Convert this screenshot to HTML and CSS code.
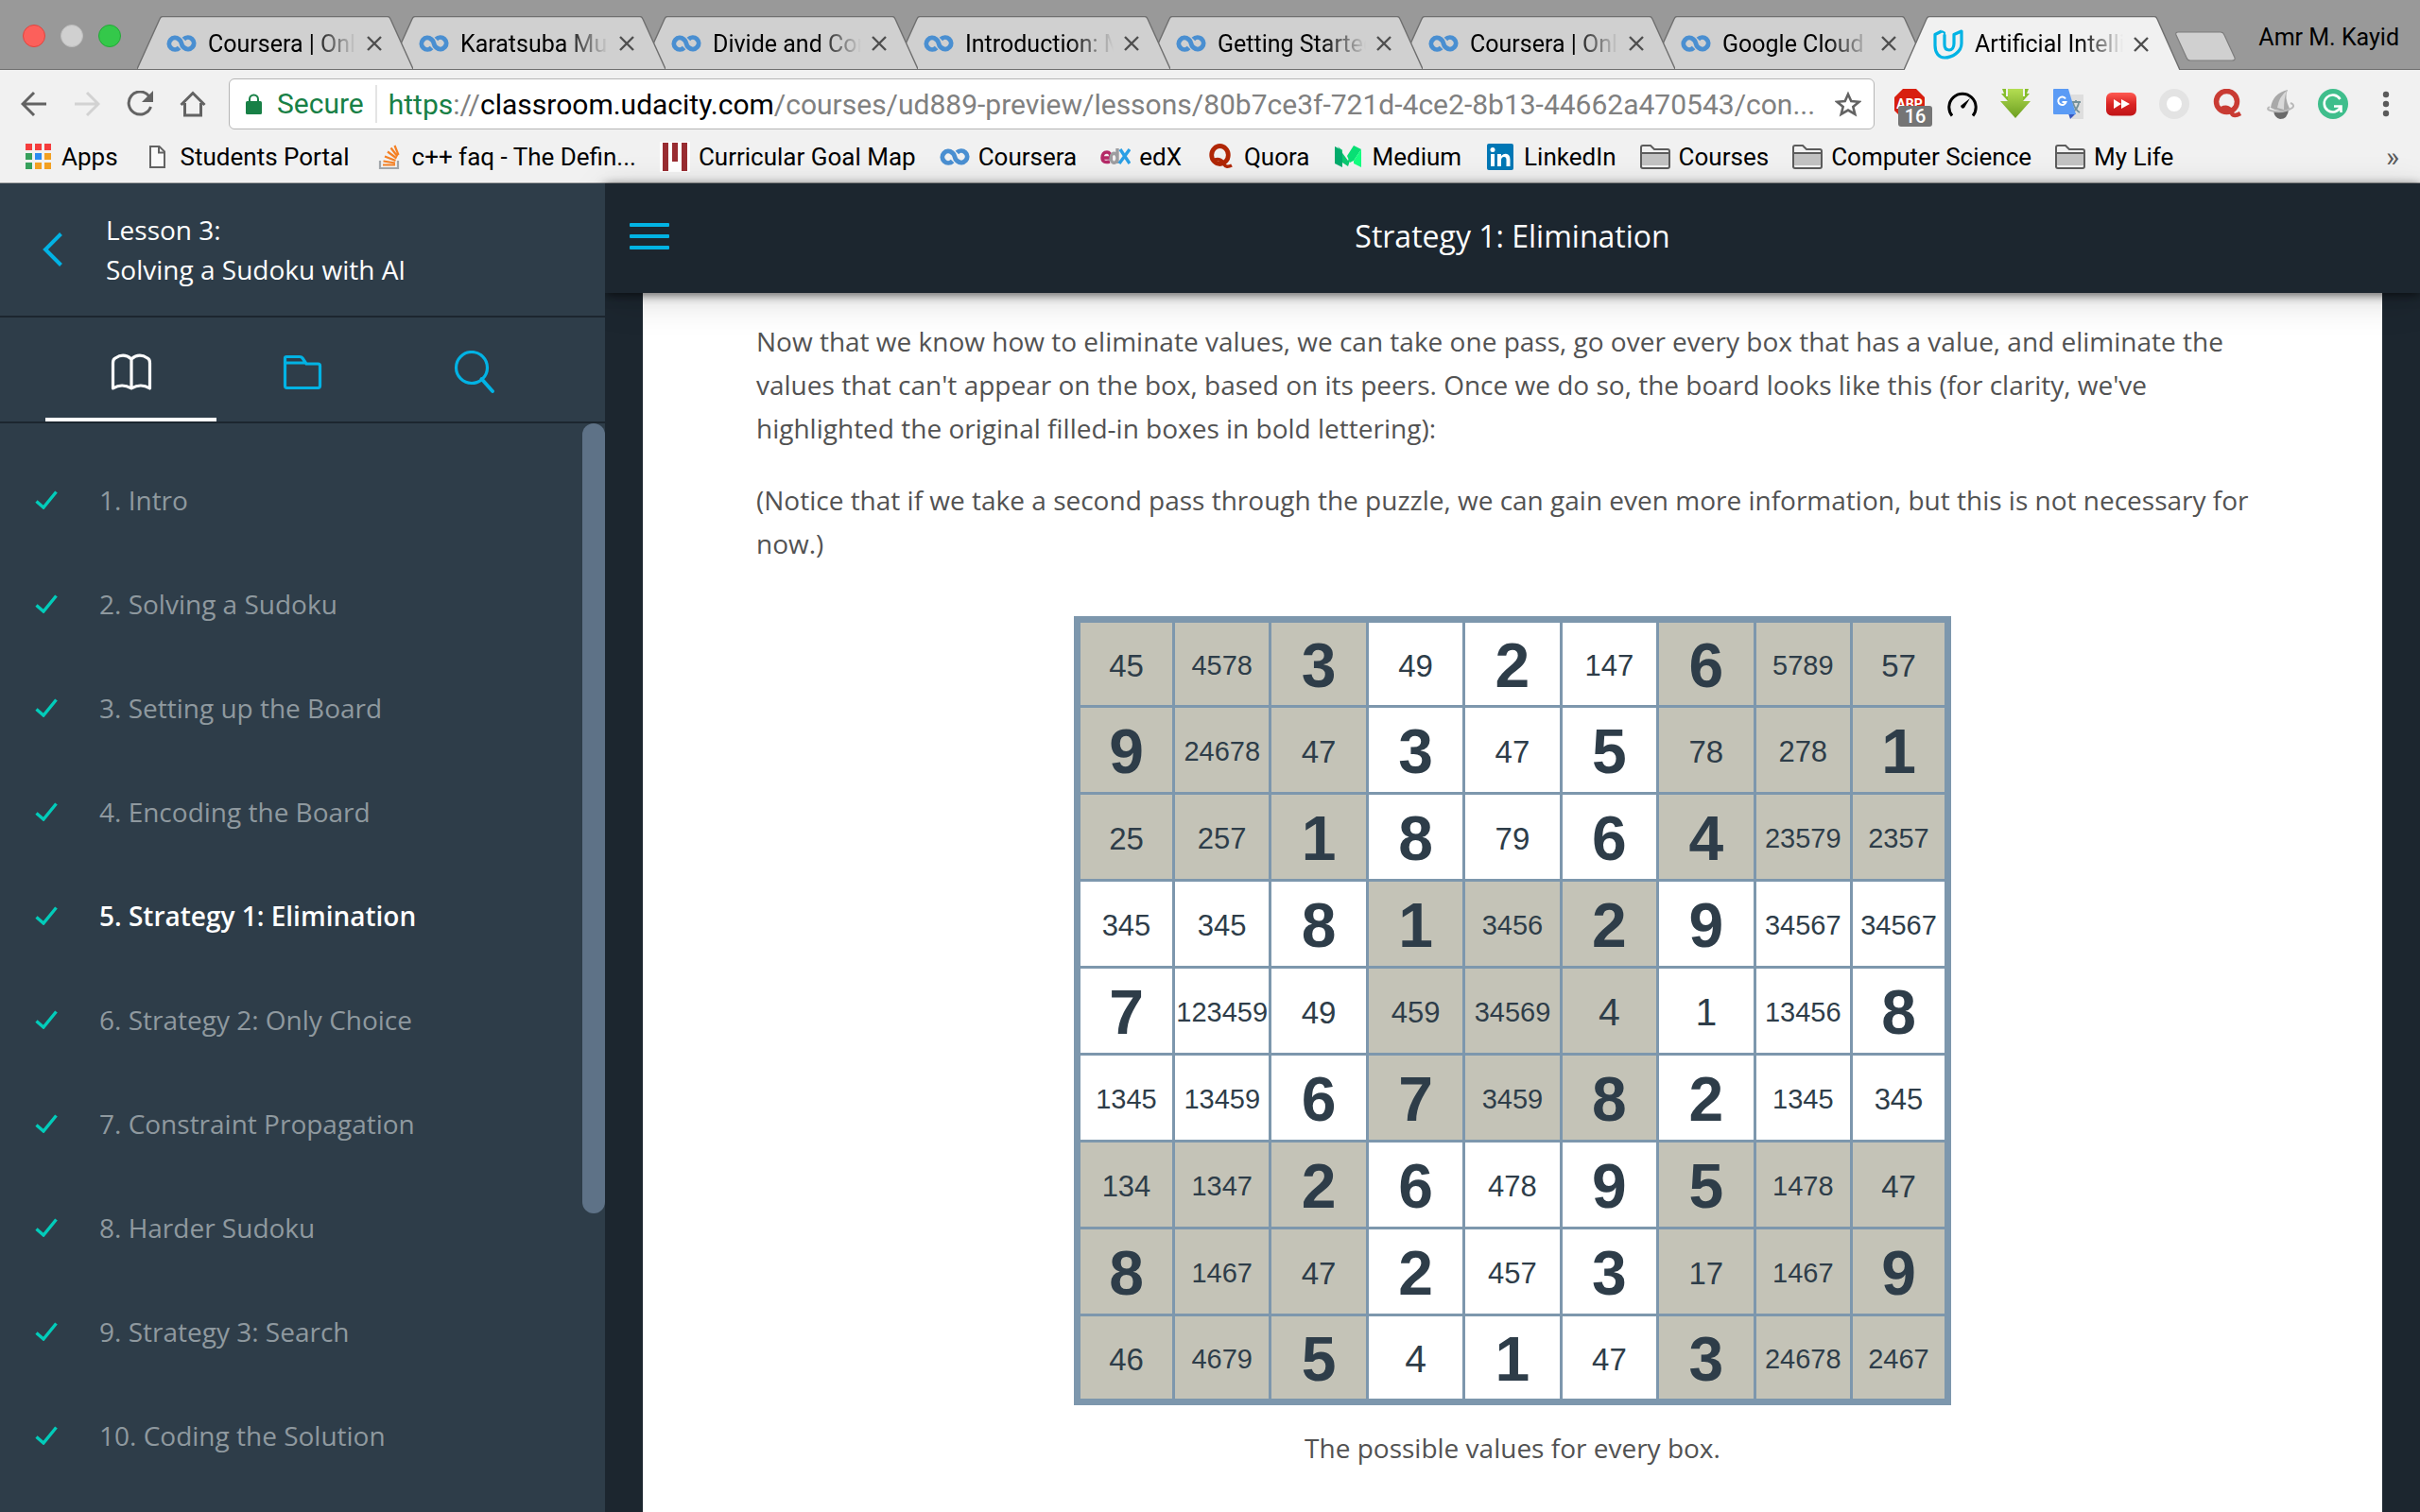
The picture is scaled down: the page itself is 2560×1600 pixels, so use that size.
FILE: index.html
```html
<!DOCTYPE html>
<html lang="en">
<head>
<meta charset="utf-8">
<title>Strategy 1: Elimination</title>
<link rel="stylesheet" href="styles.css">
</head>
<body>
<svg class="defs" aria-hidden="true">
  <symbol id="coursera" viewBox="0 0 31 17">
    <path d="M17.800 4.200A6 6 0 1 1 18.200 12.800Q15.800 11 15.500 8.500Q15.200 6 12.800 4.200A6 6 0 1 0 13.200 12.800" fill="none" stroke="#4a8fd1" stroke-width="4.800"/>
  </symbol>
  <symbol id="tab-shape" viewBox="0 0 292 57" preserveAspectRatio="none">
    <path d="M0 57L24 3Q25 .5 27 .5H265Q267 .5 268 3L292 57Z" fill="currentColor"/>
    <path d="M0 57L24 3Q25 .5 27 .5H265Q267 .5 268 3L292 57" fill="none" stroke="#6f6f6f" stroke-width="1.4"/>
  </symbol>
  <symbol id="close" viewBox="0 0 16 16"><path d="M1 1L15 15M15 1L1 15" stroke="#4f4f4f" stroke-width="2.4" fill="none"/></symbol>
  <symbol id="folder" viewBox="0 0 32 26">
    <path d="M1 24V3Q1 1 3 1H11L15 5H29Q31 5 31 7V23Q31 25 29 25H3Q1 25 1 23Z" fill="#f1f1f1" stroke="#5c5c5c" stroke-width="2"/>
    <path d="M2 9.500H30V22H2Z" fill="#c2c2c2"/><path d="M1 9H31" stroke="#5c5c5c" stroke-width="2"/>
  </symbol>
  <symbol id="check" viewBox="0 0 24 20"><path d="M1.500 11.500L9 18L22.500 1.500" fill="none" stroke="#02ccba" stroke-width="3.400"/></symbol>
</svg>

<header class="browser">
  <div class="titlebar">
    <div class="lights">
      <button class="light red" aria-label="Close window"></button>
      <button class="light grey" aria-label="Minimize window"></button>
      <button class="light green" aria-label="Zoom window"></button>
    </div>
    <nav class="tabs" aria-label="Browser tabs">
      <div class="tab"><svg class="shape"><use href="#tab-shape"/></svg><svg class="fav"><use href="#coursera"/></svg><a href="#" class="tab-title">Coursera | Online</a><button class="close" aria-label="Close tab"><svg><use href="#close"/></svg></button></div>
      <div class="tab"><svg class="shape"><use href="#tab-shape"/></svg><svg class="fav"><use href="#coursera"/></svg><a href="#" class="tab-title">Karatsuba Multi</a><button class="close" aria-label="Close tab"><svg><use href="#close"/></svg></button></div>
      <div class="tab"><svg class="shape"><use href="#tab-shape"/></svg><svg class="fav"><use href="#coursera"/></svg><a href="#" class="tab-title">Divide and Conq</a><button class="close" aria-label="Close tab"><svg><use href="#close"/></svg></button></div>
      <div class="tab"><svg class="shape"><use href="#tab-shape"/></svg><svg class="fav"><use href="#coursera"/></svg><a href="#" class="tab-title">Introduction: Ma</a><button class="close" aria-label="Close tab"><svg><use href="#close"/></svg></button></div>
      <div class="tab"><svg class="shape"><use href="#tab-shape"/></svg><svg class="fav"><use href="#coursera"/></svg><a href="#" class="tab-title">Getting Started</a><button class="close" aria-label="Close tab"><svg><use href="#close"/></svg></button></div>
      <div class="tab"><svg class="shape"><use href="#tab-shape"/></svg><svg class="fav"><use href="#coursera"/></svg><a href="#" class="tab-title">Coursera | Online</a><button class="close" aria-label="Close tab"><svg><use href="#close"/></svg></button></div>
      <div class="tab"><svg class="shape"><use href="#tab-shape"/></svg><svg class="fav"><use href="#coursera"/></svg><a href="#" class="tab-title">Google Cloud Pl</a><button class="close" aria-label="Close tab"><svg><use href="#close"/></svg></button></div>
      <div class="tab active"><svg class="shape"><use href="#tab-shape"/></svg><svg class="fav" viewBox="0 0 32 32"><path d="M9 2L2 5.500V17C2 25 6 30 12 30C20 30 30 24 30 15V2L22 5.500V15C22 19 20 22 17 22C14 22 12 20 12 16V5.500" fill="none" stroke="#02b3e4" stroke-width="3.200" stroke-linejoin="round"/><path d="M9 2L12 3.500V16" fill="none" stroke="#02b3e4" stroke-width="2"/></svg><a href="#" class="tab-title">Artificial Intellige</a><button class="close" aria-label="Close tab"><svg><use href="#close"/></svg></button></div>
    </nav>
    <button class="new-tab" aria-label="New tab"><svg viewBox="0 0 66 32"><path d="M4 1H49Q52 1 53 4L64 28Q65 31 61 31H17Q14 31 13 28L2 4Q1 1 4 1Z" fill="#d0d0d0" stroke="#7d7d7d" stroke-width="1.200"/></svg></button>
    <span class="profile">Amr M. Kayid</span>
  </div>

  <div class="toolbar">
    <div class="nav">
      <button aria-label="Back"><svg viewBox="0 0 28 28"><path d="M14 2L2 14L14 26M2 14H27" fill="none" stroke="#636363" stroke-width="3"/></svg></button>
      <button aria-label="Forward"><svg viewBox="0 0 28 28"><path d="M14 2L26 14L14 26M26 14H1" fill="none" stroke="#d2d2d2" stroke-width="3"/></svg></button>
      <button aria-label="Reload"><svg viewBox="0 0 28 28"><path d="M23.500 5.500A12 12 0 1 0 25.500 17" fill="none" stroke="#636363" stroke-width="3"/><path d="M28 0V12H16Z" fill="#636363"/></svg></button>
      <button aria-label="Home"><svg viewBox="0 0 28 28"><path d="M1.500 15L14 2.500L26.500 15M5.500 13V26H22.500V13" fill="none" stroke="#636363" stroke-width="3"/></svg></button>
    </div>
    <div class="omnibox">
      <svg class="lock" viewBox="0 0 17 22"><path d="M4 10V6A4.500 4.500 0 0 1 13 6V10" fill="none" stroke="#188046" stroke-width="2"/><rect y="8" width="17" height="14" rx="1.500" fill="#188046"/></svg>
      <span class="secure">Secure</span>
      <div class="url" role="textbox" contenteditable="true" spellcheck="false" aria-label="Address"><span class="scheme">https</span>://<span class="host">classroom.udacity.com</span>/courses/ud889-preview/lessons/80b7ce3f-721d-4ce2-8b13-44662a470543/con...</div>
      <button class="star" aria-label="Bookmark this page"><svg viewBox="0 0 30 28"><path d="M15 3L18.500 10.800L27.500 11.600L20.700 17.200L22.800 25.500L15 21L7.200 25.500L9.300 17.200L2.500 11.600L11.500 10.800Z" fill="none" stroke="#636363" stroke-width="2.800"/></svg></button>
    </div>
    <div class="extensions">
      <button aria-label="Adblock Plus, 16 blocked"><svg viewBox="0 0 32 32"><path d="M9 0H23L32 9V23L23 32H9L0 23V9Z" fill="#d81f10"/><text x="16" y="21" text-anchor="middle" class="abp">ABP</text></svg><span class="badge">16</span></button>
      <button aria-label="Speed"><svg viewBox="0 0 32 32"><path d="M5 28.500A14.200 14.200 0 1 1 27 28.500" fill="none" stroke="#000" stroke-width="3"/><path d="M24 10L18 20Q15 22 14 18Z" fill="#000"/></svg></button>
      <button aria-label="Downloader"><svg viewBox="0 0 32 32"><defs><linearGradient id="g1" x2="0" y2="1"><stop stop-color="#b4de52"/><stop offset="1" stop-color="#6c9e20"/></linearGradient></defs><path d="M2 0H6V8H11L8 13L1 5H4Z M30 0H26V8H21L24 13L31 5H28Z" fill="#86bd2c"/><path d="M8 0H24V13H32L16 31L0 13H8Z" fill="url(#g1)"/></svg></button>
      <button aria-label="Translate"><svg viewBox="0 0 32 32"><path d="M12 6H32V32H20Z" fill="#dedede"/><path d="M19 14H29M24 12V14M21 15Q23 22 28 25M27 15Q26 21 20 25" stroke="#74919a" stroke-width="1.800" fill="none"/><path d="M16 26H24L18 32Z" fill="#3859c0"/><path d="M0 1Q0 0 1 0H16L24 27H1Q0 27 0 26Z" fill="#5b9bf5"/><path d="M13 10.500A4.200 4.200 0 1 0 13.500 14H9.500" stroke="#fff" stroke-width="2" fill="none"/></svg></button>
      <button aria-label="Playback"><svg viewBox="0 0 32 32"><defs><linearGradient id="g2" x2="0" y2="1"><stop stop-color="#ff5a52"/><stop offset=".5" stop-color="#d92423"/><stop offset="1" stop-color="#c01417"/></linearGradient></defs><rect y="4" width="32" height="24.500" rx="6" fill="url(#g2)"/><path d="M8 11L16 16L8 21ZM16 11L25 16L16 21Z" fill="#fff"/></svg></button>
      <button aria-label="Recorder"><svg viewBox="0 0 32 32"><circle cx="16" cy="16" r="16" fill="#e3e3e3"/><circle cx="16" cy="16" r="8" fill="#fff"/></svg></button>
      <button aria-label="Quora"><svg viewBox="0 0 32 32"><ellipse cx="15.500" cy="13.500" rx="11" ry="11" fill="none" stroke="#c93b33" stroke-width="5.500"/><path d="M10 21Q18 17 21 26Q23 30 30 26" stroke="#c93b33" stroke-width="4.500" fill="none"/></svg></button>
      <button aria-label="Rocket"><svg viewBox="0 0 32 32"><path d="M6 20Q8 5 24 1Q20 8 26 21Q16 26 6 20Z" fill="#a9a9a9"/><path d="M13 20Q15 8 23 2Q20 10 20 22Z" fill="#d9d9d9"/><path d="M9 23Q18 26 25 22Q24 32 16 32Q10 31 9 23Z" fill="#6a6a6a"/><path d="M5 19Q0 22 8 23.500Q20 26 29 20Q32 17 27 15" fill="none" stroke="#b9b9b9" stroke-width="2"/></svg></button>
      <button aria-label="Grammarly"><svg viewBox="0 0 32 32"><circle cx="16" cy="16" r="16" fill="#3fbe8c"/><path d="M23.500 11A9 9 0 1 0 24 19M17 18.500H24.500V25" fill="none" stroke="#fff" stroke-width="2.600"/></svg></button>
      <button class="more" aria-label="Menu"><svg viewBox="0 0 8 28"><circle cx="4" cy="4" r="3.200" fill="#5a5a5a"/><circle cx="4" cy="14" r="3.200" fill="#5a5a5a"/><circle cx="4" cy="24" r="3.200" fill="#5a5a5a"/></svg></button>
    </div>
  </div>

  <nav class="bookmarks" aria-label="Bookmarks">
    <a href="#"><svg viewBox="0 0 32 32"><path d="M3 2h7v7H3zM13 2h7v7h-7zM23 2h7v7h-7z" fill="#f53d3d"/><path d="M3 12h7v7H3zM3 22h7v7H3z" fill="#37a05c"/><path d="M13 12h7v7h-7z" fill="#2a8bf2"/><path d="M23 12h7v7h-7zM13 22h7v7h-7zM23 22h7v7h-7z" fill="#f2a022"/></svg>Apps</a>
    <a href="#"><svg viewBox="0 0 32 32"><path d="M9 5H18.500L24 10.500V27H9Z" fill="#fafafa" stroke="#636363" stroke-width="2"/><path d="M18 5V11.500H24" fill="none" stroke="#636363" stroke-width="2"/></svg>Students Portal</a>
    <a href="#"><svg viewBox="0 0 32 32"><path d="M7 20V28H26V20" fill="none" stroke="#a2a6aa" stroke-width="2.200"/><path d="M10 24.500H23M10.500 20.500L23 22.500M12 15.500L23.500 20M15 10.500L24.500 17.500M18.500 6.500L25.500 15.500M22.500 4L26.500 14" stroke="#f48024" stroke-width="2.200"/></svg>c++ faq - The Defin...</a>
    <a href="#"><svg viewBox="0 0 32 32"><rect width="32" height="32" fill="#fff"/><path d="M3 1h6v30H3zM13 1h6v20h-6zM23 1h6v30h-6z" fill="#992d32"/></svg>Curricular Goal Map</a>
    <a href="#"><svg><use href="#coursera"/></svg>Coursera</a>
    <a href="#"><svg viewBox="0 0 32 32"><g fill="none" stroke-width="3.400"><path d="M2 17H11Q11 11 7 11Q2 11 2 17Q2 23 10 21" stroke="#b52a67"/><path d="M18 17A3.500 5 0 1 0 18 17.500M18 7V23" stroke="#9d9da0"/><path d="M21 8L31 23M31 8L20 23" stroke="#2a9fe5"/></g></svg>edX</a>
    <a href="#"><svg viewBox="0 0 32 32"><ellipse cx="15.500" cy="14" rx="8.800" ry="9.500" fill="none" stroke="#b02706" stroke-width="4.800"/><path d="M10 19Q17 17 20 24Q22 28 28 25" stroke="#b02706" stroke-width="3.600" fill="none"/></svg>Quora</a>
    <a href="#"><svg viewBox="0 0 32 32"><path d="M2 5L10 9V27L2 23Z" fill="#02ab6c"/><path d="M5 5L16 20L22 8L16 26L10 22V9Z" fill="#0bc870"/><path d="M15 15L22 4L30 8L22 20L18 22Z" fill="#08df74"/><path d="M22 20L30 8V27L22 23Z" fill="#14ff80"/></svg>Medium</a>
    <a href="#"><svg viewBox="0 0 32 32"><rect x="2" y="2" width="28" height="28" rx="2" fill="#0077b5"/><path d="M6 13h4v13H6zM13 13h4v2q4-4 8-1q1.500 1.500 1.500 5v7h-4v-7q0-3-2.500-3t-3 3v7h-4z" fill="#fff"/><circle cx="8" cy="8.500" r="2.500" fill="#fff"/></svg>LinkedIn</a>
    <a href="#"><svg><use href="#folder"/></svg>Courses</a>
    <a href="#"><svg><use href="#folder"/></svg>Computer Science</a>
    <a href="#"><svg><use href="#folder"/></svg>My Life</a>
    <button class="overflow" aria-label="More bookmarks">»</button>
  </nav>
</header>

<div class="classroom">
  <aside class="sidebar">
    <div class="lesson">
      <a href="#" class="back" aria-label="Back to lessons"><svg viewBox="0 0 22 36"><path d="M19.500 1.500L3 18L19.500 34.500" fill="none" stroke="#02b3e4" stroke-width="4"/></svg></a>
      <h2>Lesson 3:<br>Solving a Sudoku with AI</h2>
    </div>
    <div class="panes">
      <button class="pane selected" aria-label="Contents"><svg viewBox="0 0 44 48"><path d="M22 9Q14 2 5 8Q2.500 9 2.500 13V40Q12 34 22 40Q32 34 41.500 40V13Q41.500 9 39 8Q30 2 22 9ZM22 9V40" fill="none" stroke="#fff" stroke-width="3.200" stroke-linejoin="round"/></svg></button>
      <button class="pane" aria-label="Resources"><svg viewBox="0 0 44 48"><path d="M3.500 14V8Q3.500 6.500 5 6.500H19Q21 6.500 22 8L26 14H38.500Q40.500 14 40.500 16V37Q40.500 39.500 38.500 39.500H5.500Q3.500 39.500 3.500 37V13H26" fill="none" stroke="#02b3e4" stroke-width="3.200"/></svg></button>
      <button class="pane" aria-label="Search"><svg viewBox="0 0 44 48"><circle cx="20" cy="18" r="16.500" fill="none" stroke="#02b3e4" stroke-width="3.200"/><path d="M30.500 30L42 43" stroke="#02b3e4" stroke-width="3.800" stroke-linecap="round"/></svg></button>
    </div>
    <div class="contents">
      <ol>
        <li><a href="#"><svg><use href="#check"/></svg>1. Intro</a></li>
        <li><a href="#"><svg><use href="#check"/></svg>2. Solving a Sudoku</a></li>
        <li><a href="#"><svg><use href="#check"/></svg>3. Setting up the Board</a></li>
        <li><a href="#"><svg><use href="#check"/></svg>4. Encoding the Board</a></li>
        <li><a href="#" class="current"><svg><use href="#check"/></svg>5. Strategy 1: Elimination</a></li>
        <li><a href="#"><svg><use href="#check"/></svg>6. Strategy 2: Only Choice</a></li>
        <li><a href="#"><svg><use href="#check"/></svg>7. Constraint Propagation</a></li>
        <li><a href="#"><svg><use href="#check"/></svg>8. Harder Sudoku</a></li>
        <li><a href="#"><svg><use href="#check"/></svg>9. Strategy 3: Search</a></li>
        <li><a href="#"><svg><use href="#check"/></svg>10. Coding the Solution</a></li>
      </ol>
      <div class="track"><div class="thumb"></div></div>
    </div>
  </aside>

  <main>
    <div class="heading">
      <button class="menu" aria-label="Toggle sidebar"><span></span><span></span><span></span></button>
      <h1>Strategy 1: Elimination</h1>
    </div>
    <article>
      <p>Now that we know how to eliminate values, we can take one pass, go over every box that has a value, and eliminate the values that can't appear on the box, based on its peers. Once we do so, the board looks like this (for clarity, we've highlighted the original filled-in boxes in bold lettering):</p>
      <p>(Notice that if we take a second pass through the puzzle, we can gain even more information, but this is not necessary for now.)</p>
      <figure>
        <table class="board">
          <tbody>
            <tr><td class="two">45</td><td>4578</td><td class="given">3</td><td class="two">49</td><td class="given">2</td><td class="three">147</td><td class="given">6</td><td>5789</td><td class="two">57</td></tr>
            <tr><td class="given">9</td><td>24678</td><td class="two">47</td><td class="given">3</td><td class="two">47</td><td class="given">5</td><td class="two">78</td><td class="three">278</td><td class="given">1</td></tr>
            <tr><td class="two">25</td><td class="three">257</td><td class="given">1</td><td class="given">8</td><td class="two">79</td><td class="given">6</td><td class="given">4</td><td>23579</td><td>2357</td></tr>
            <tr><td class="three">345</td><td class="three">345</td><td class="given">8</td><td class="given">1</td><td>3456</td><td class="given">2</td><td class="given">9</td><td>34567</td><td>34567</td></tr>
            <tr><td class="given">7</td><td>123459</td><td class="two">49</td><td class="three">459</td><td>34569</td><td class="one">4</td><td class="one">1</td><td>13456</td><td class="given">8</td></tr>
            <tr><td>1345</td><td>13459</td><td class="given">6</td><td class="given">7</td><td>3459</td><td class="given">8</td><td class="given">2</td><td>1345</td><td class="three">345</td></tr>
            <tr><td class="three">134</td><td>1347</td><td class="given">2</td><td class="given">6</td><td class="three">478</td><td class="given">9</td><td class="given">5</td><td>1478</td><td class="two">47</td></tr>
            <tr><td class="given">8</td><td>1467</td><td class="two">47</td><td class="given">2</td><td class="three">457</td><td class="given">3</td><td class="two">17</td><td>1467</td><td class="given">9</td></tr>
            <tr><td class="two">46</td><td>4679</td><td class="given">5</td><td class="one">4</td><td class="given">1</td><td class="two">47</td><td class="given">3</td><td>24678</td><td>2467</td></tr>
          </tbody>
        </table>
        <figcaption>The possible values for every box.</figcaption>
      </figure>
    </article>
  </main>
</div>
</body>
</html>
```

FILE: styles.css
```css
* { box-sizing: border-box; }
body {
  margin: 0;
  height: 100vh;
  display: flex;
  flex-direction: column;
  overflow: hidden;
  font-family: "Open Sans", sans-serif;
}
button { border: 0; padding: 0; background: none; font: inherit; color: inherit; }
a { color: inherit; text-decoration: none; }
svg { display: block; flex: none; }
.defs { position: absolute; width: 0; height: 0; }

/* Browser window */
.browser {
  flex: none;
  background: #f1f1f1;
  border-bottom: 1px solid #a9a9a9;
  font-family: Roboto, sans-serif;
  font-size: 25px;
  color: #000;
}
.titlebar {
  display: flex;
  height: 74px;
  padding: 17px 22px 0 24px;
  background: #999;
  border-bottom: 1px solid #6f6f6f;
}
.lights { display: flex; gap: 16px; width: 121px; padding-top: 9px; }
.light { width: 24px; height: 24px; border-radius: 50%; border: 1px solid; }
.red { background: #fc605b; border-color: #e0443e; }
.grey { background: #d0d0d0; border-color: #bdbdbd; }
.green { background: #34c84a; border-color: #24a838; }
.tabs { display: flex; isolation: isolate; }
.tab {
  position: relative;
  display: flex;
  align-items: center;
  width: 292px;
  height: 56px;
  padding: 2px 33px 0 31px;
  color: #d0d0d0;
}
.tab + .tab { margin-left: -25px; }
.tab:nth-child(1) { z-index: 7; }
.tab:nth-child(2) { z-index: 6; }
.tab:nth-child(3) { z-index: 5; }
.tab:nth-child(4) { z-index: 4; }
.tab:nth-child(5) { z-index: 3; }
.tab:nth-child(6) { z-index: 2; }
.tab:nth-child(7) { z-index: 1; }
.tab.active { z-index: 8; height: 57px; color: #f1f1f1; }
.shape { position: absolute; inset: 0; width: 100%; height: 100%; z-index: -1; }
.fav { width: 32px; height: 32px; }
.tab-title {
  flex: 1;
  margin: 0 11px 0 12px;
  overflow: hidden;
  white-space: nowrap;
  color: #000;
  -webkit-mask-image: linear-gradient(to right, #000 70%, transparent);
  mask-image: linear-gradient(to right, #000 70%, transparent);
}
.close svg { width: 16px; height: 16px; }
.new-tab { align-self: flex-start; margin: 16px 0 0 -6px; }
.new-tab svg { width: 66px; height: 32px; }
.profile { margin-left: auto; padding-top: 8px; }

.toolbar { display: flex; align-items: center; height: 72px; padding: 0 32px 0 22px; }
.nav { display: flex; flex: none; gap: 28px; width: 220px; }
.nav svg, .star svg { width: 28px; height: 28px; }
.omnibox {
  flex: 1;
  min-width: 0;
  display: flex;
  align-items: center;
  height: 54px;
  padding: 0 13px 0 17px;
  border: 1px solid #b5b5b5;
  border-radius: 6px;
  background: #fff;
  font-size: 30px;
}
.lock { width: 17px; height: 22px; }
.secure { padding: 0 12px 0 16px; line-height: 40px; color: #188046; border-right: 2px solid #e4e4e4; }
.url { flex: 1; min-width: 0; padding-left: 12px; color: #808080; white-space: nowrap; overflow: hidden; }
.scheme { color: #188046; }
.host { color: #000; }
.extensions { display: flex; align-items: center; gap: 24px; margin-left: 21px; }
.extensions button { position: relative; }
.extensions svg { width: 32px; height: 32px; }
.extensions .more svg { width: 8px; height: 28px; margin-left: 12px; }
.abp { font: bold 14px Roboto, sans-serif; fill: #fff; }
.badge {
  position: absolute;
  left: 4px;
  top: 18px;
  width: 36px;
  border-radius: 3px;
  background: #757575;
  color: #fff;
  font-size: 20px;
  font-weight: 500;
  line-height: 22px;
}

.bookmarks { display: flex; align-items: center; gap: 25px; height: 47px; padding: 0 22px 8px 24px; font-size: 26px; }
.bookmarks a { display: flex; align-items: center; gap: 9px; white-space: nowrap; }
.bookmarks svg { width: 32px; height: 32px; }
.overflow { margin-left: auto; color: #5a5a5a; font-size: 30px; }

/* Classroom */
.classroom { flex: 1; display: flex; min-height: 0; background: #1c262f; }
.sidebar {
  position: relative;
  z-index: 2;
  flex: none;
  display: flex;
  flex-direction: column;
  width: 25%;
  background: #2e3d49;
  color: #fff;
  font-size: 28px;
}
.lesson { display: flex; align-items: center; gap: 45px; height: 142px; padding: 0 45px; border-bottom: 2px solid #1c262f; }
.lesson h2 { margin: 0; font-size: 28px; font-weight: 400; line-height: 42px; }
.back svg { width: 22px; height: 36px; }
.panes { display: flex; padding: 0 48px; height: 112px; border-bottom: 2px solid #1c262f; }
.pane {
  flex: 1;
  display: flex;
  align-items: center;
  justify-content: center;
  padding-top: 12px;
  border-bottom: 4px solid transparent;
}
.pane.selected { border-bottom-color: #fff; }
.pane svg { width: 44px; height: 48px; }
.contents { flex: 1; display: flex; min-height: 0; }
.contents ol { flex: 1; margin: 0; padding: 26px 0 0; list-style: none; overflow: hidden; }
.contents li a { display: flex; align-items: center; gap: 44px; height: 110px; padding-left: 37px; color: #8f999f; }
.contents li svg { width: 24px; height: 20px; }
.contents .current { color: #fff; font-weight: 600; }
.track { width: 24px; }
.thumb { height: 72.6%; border-radius: 12px; background: #5e7287; }

main { flex: 1; display: flex; flex-direction: column; min-width: 0; }
.heading {
  position: relative;
  z-index: 1;
  flex: none;
  display: flex;
  align-items: center;
  height: 116px;
  padding: 0 26px 5px;
  background: #1c262f;
  box-shadow: 0 2px 10px rgba(0, 0, 0, .6), 0 8px 36px rgba(0, 0, 0, .15);
}
.menu { display: flex; flex-direction: column; gap: 8px; width: 42px; }
.menu span { height: 4px; border-radius: 1px; background: #02b3e4; }
h1 { flex: 1; margin: 0 42px 0 0; text-align: center; color: #fff; font-size: 32px; font-weight: 400; }
article {
  flex: 1;
  min-height: 0;
  margin: 0 40px;
  padding: 28px 120px 0;
  background: #fff;
  color: #525252;
  font-size: 28px;
  line-height: 46px;
}
article p { margin: 0 0 30px; }
figure { display: flex; flex-direction: column; align-items: center; gap: 22px; margin: 54px 0 0; }
.board {
  table-layout: fixed;
  width: 928px;
  padding: 4px;
  border-spacing: 3px;
  background: #7d97ad;
  color: #2e3d49;
  font-family: "Liberation Sans", Arial, sans-serif;
  font-size: 29px;
  line-height: 1;
}
.board td { height: 89px; padding: 3px 0 0; background: #fff; text-align: center; }
.board tr:first-child td, .board tr:last-child td { height: 87px; }
.board td:first-child, .board td:last-child { width: 97px; }
.board tr:nth-child(-n+3) td:nth-child(-n+3),
.board tr:nth-child(-n+3) td:nth-child(n+7),
.board tr:nth-child(n+7) td:nth-child(-n+3),
.board tr:nth-child(n+7) td:nth-child(n+7),
.board tr:nth-child(n+4):nth-child(-n+6) td:nth-child(n+4):nth-child(-n+6) { background: #c4c3b7; }
.board .three { font-size: 31px; }
.board .two { font-size: 33px; }
.board .one { font-size: 41px; }
.board .given { font-size: 66px; font-weight: 700; }
```
